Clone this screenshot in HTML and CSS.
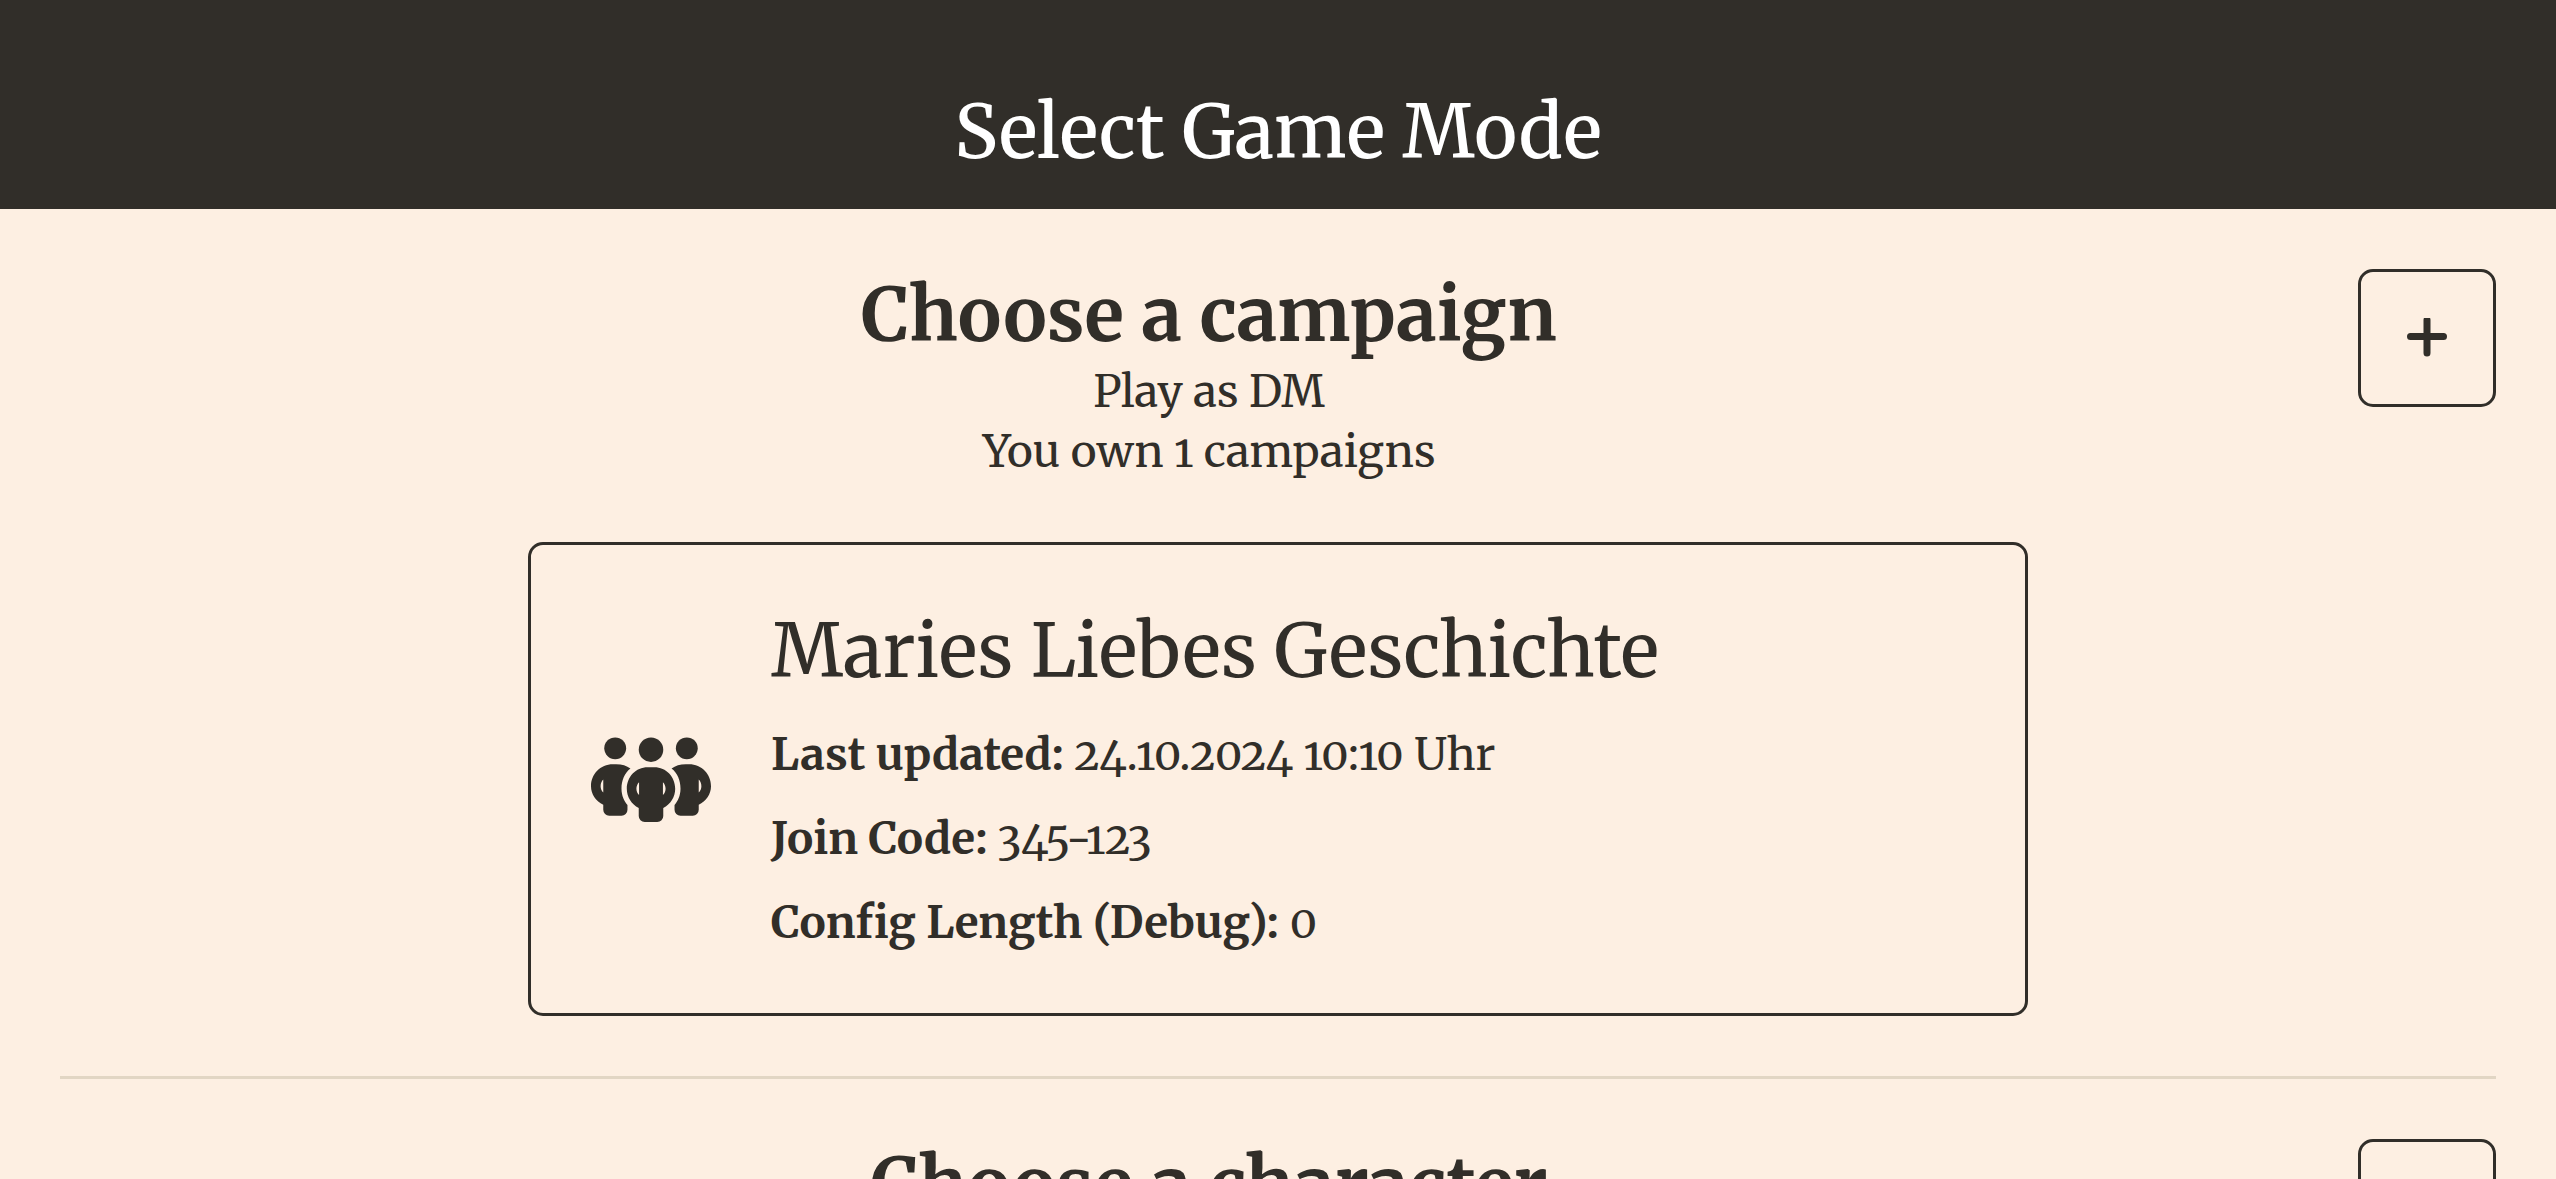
FILE: index.html
```html
<!DOCTYPE html>
<html lang="en">
<head>
<meta charset="utf-8">
<meta name="viewport" content="width=device-width, initial-scale=1">
<title>Select Game Mode</title>
<link rel="stylesheet" href="styles.css">
</head>
<body class="app">
<header class="topbar">
  <h1 class="topbar-title">Select Game Mode</h1>
</header>
<main class="content">
  <section class="mode">
    <div class="mode-head">
      <div class="mode-intro">
        <h2 class="mode-title">Choose a campaign</h2>
        <p class="mode-line">Play as DM</p>
        <p class="mode-line">You own 1 campaigns</p>
      </div>
      <button class="add-button" type="button" aria-label="Add campaign">
        <svg class="add-icon" viewBox="0 0 40 40" aria-hidden="true"><path d="M20 2v33M3.500 18.500h33"/></svg>
      </button>
    </div>
    <a class="card" href="#campaign">
      <svg class="card-icon" viewBox="92 110 362 259" aria-hidden="true">
        <defs>
          <g id="side-person">
            <circle cx="165" cy="147" r="33"/>
            <path fill-rule="evenodd" d="M158 195h10c18 0 31 4 43 13C193 222 184 245 184 268c0 22 8 38 18 50v14a18 18 0 0 1-18 18h-37a18 18 0 0 1-18-18v-15c-22-11-37-32-37-56C92 225 120 195 158 195zM129 241c-5 5-8 12-8 20s3 14 8 19z"/>
          </g>
        </defs>
        <use href="#side-person"/>
        <use href="#side-person" transform="translate(546 0) scale(-1 1)"/>
        <circle cx="273" cy="151" r="37"/>
        <path fill-rule="evenodd" d="M263 204h20c36 0 63 29 63 65 0 25-14 47-36 58v24a18 18 0 0 1-18 18h-38a18 18 0 0 1-18-18v-24c-22-11-36-33-36-58 0-36 27-65 63-65zM237 249c-5 5-8 12-8 20s3 14 8 19zM309 249c5 5 8 12 8 20s-3 14-8 19z"/>
      </svg>
      <div class="card-body">
        <h3 class="card-title">Maries Liebes Geschichte</h3>
        <p class="card-line"><strong>Last updated:</strong> 24.10.2024 10:10 Uhr</p>
        <p class="card-line"><strong>Join Code:</strong> 345-123</p>
        <p class="card-line"><strong>Config Length (Debug):</strong> 0</p>
      </div>
    </a>
  </section>
  <hr class="divider">
  <section class="mode">
    <div class="mode-head">
      <div class="mode-intro">
        <h2 class="mode-title">Choose a character</h2>
      </div>
      <button class="add-button" type="button" aria-label="Add character">
        <svg class="add-icon" viewBox="0 0 40 40" aria-hidden="true"><path d="M20 2v33M3.500 18.500h33"/></svg>
      </button>
    </div>
  </section>
</main>
</body>
</html>
```
FILE: styles.css
```css
:root {
  --ink: #312e29;
  --paper: #fdefe2;
  --line: #e2d6c4;
}

* {
  box-sizing: border-box;
  margin: 0;
}

.app {
  display: flex;
  flex-direction: column;
  height: 100vh;
  background: var(--paper);
  color: var(--ink);
  font-family: Merriweather, "DejaVu Serif Condensed", "DejaVu Serif", serif;
  font-size: 44px;
  line-height: 60px;
  font-variant-numeric: oldstyle-nums;
}

.topbar {
  padding: 86px 60px 30px;
  background: var(--ink);
  color: #fff;
  text-align: center;
}

.topbar-title {
  font-size: 73px;
  font-weight: 500;
  line-height: 93px;
}

.content {
  flex: 1;
  min-height: 0;
  overflow: hidden;
  padding: 60px;
}

.mode {
  display: flex;
  flex-direction: column;
  align-items: center;
  gap: 60px;
}

.mode-head {
  display: flex;
  align-items: flex-start;
  width: 100%;
}

.mode-intro {
  flex: 1;
  text-align: center;
}

.mode-title {
  font-size: 73px;
  font-weight: 700;
  line-height: 93px;
}

.add-button {
  display: grid;
  place-items: center;
  width: 138px;
  height: 138px;
  padding: 0;
  border: 3px solid var(--ink);
  border-radius: 15px;
  background: transparent;
  color: inherit;
}

.add-icon {
  width: 40px;
  height: 40px;
  fill: none;
  stroke: currentColor;
  stroke-width: 7;
  stroke-linecap: round;
}

.card {
  display: flex;
  align-items: center;
  gap: 60px;
  width: 100%;
  max-width: 1500px;
  padding: 60px;
  border: 3px solid var(--ink);
  border-radius: 15px;
  color: inherit;
  text-decoration: none;
}

.card-icon {
  flex: none;
  width: 120px;
  height: 86px;
  fill: currentColor;
}

.card-body {
  display: grid;
  gap: 24px;
}

.card-title {
  padding-bottom: 3px;
  font-size: 73px;
  font-weight: 400;
  line-height: 93px;
}

.divider {
  height: 3px;
  margin: 60px 0;
  border: 0;
  background: var(--line);
}
```
